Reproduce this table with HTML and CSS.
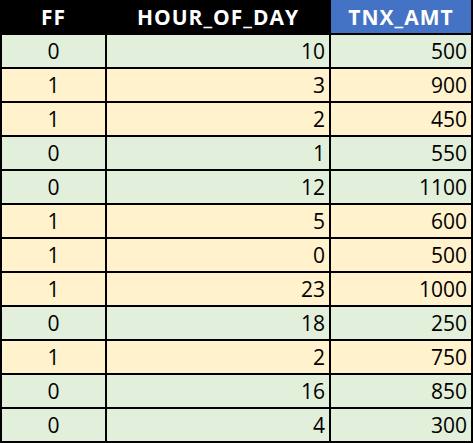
FILE: index.html
```html
<!DOCTYPE html>
<html>
<head>
<meta charset="utf-8">
<link rel="stylesheet" href="styles.css">
</head>
<body>
<div class="sheet">
  <div class="hd">FF</div><div class="hd">HOUR_OF_DAY</div><div class="hd blue">TNX_AMT</div>
  <div class="c g ctr">0</div><div class="c g">10</div><div class="c g">500</div>
  <div class="c y ctr">1</div><div class="c y">3</div><div class="c y">900</div>
  <div class="c y ctr">1</div><div class="c y">2</div><div class="c y">450</div>
  <div class="c g ctr">0</div><div class="c g">1</div><div class="c g">550</div>
  <div class="c g ctr">0</div><div class="c g">12</div><div class="c g">1100</div>
  <div class="c y ctr">1</div><div class="c y">5</div><div class="c y">600</div>
  <div class="c y ctr">1</div><div class="c y">0</div><div class="c y">500</div>
  <div class="c y ctr">1</div><div class="c y">23</div><div class="c y">1000</div>
  <div class="c g ctr">0</div><div class="c g">18</div><div class="c g">250</div>
  <div class="c y ctr">1</div><div class="c y">2</div><div class="c y">750</div>
  <div class="c g ctr">0</div><div class="c g">16</div><div class="c g">850</div>
  <div class="c g ctr">0</div><div class="c g">4</div><div class="c g">300</div>
</div>
</body>
</html>
```
FILE: styles.css
```css
html, body { margin: 0; padding: 0; background: #ffffff; }
.sheet {
  width: 473px;
  height: 443px;
  box-sizing: border-box;
  display: grid;
  grid-template-columns: 103px 222px 140px;
  grid-template-rows: 33px repeat(12, 32px);
  column-gap: 2px;
  row-gap: 2px;
  padding: 0 2px 2px 2px;
  background: #000000;
  font-family: "Open Sans", "Liberation Sans", sans-serif;
  font-size: 21px;
  color: #000000;
}
.hd {
  background: #000000;
  color: #ffffff;
  font-weight: bold;
  font-size: 21px;
  letter-spacing: 1px;
  display: flex;
  align-items: center;
  justify-content: center;
}
.hd.blue { background: #4472c4; }
.c {
  display: flex;
  align-items: center;
  justify-content: flex-end;
  padding-right: 4px;
}
.c.ctr { justify-content: center; padding-right: 0; }
.g { background: #e2efda; }
.y { background: #fff2cc; }
```
